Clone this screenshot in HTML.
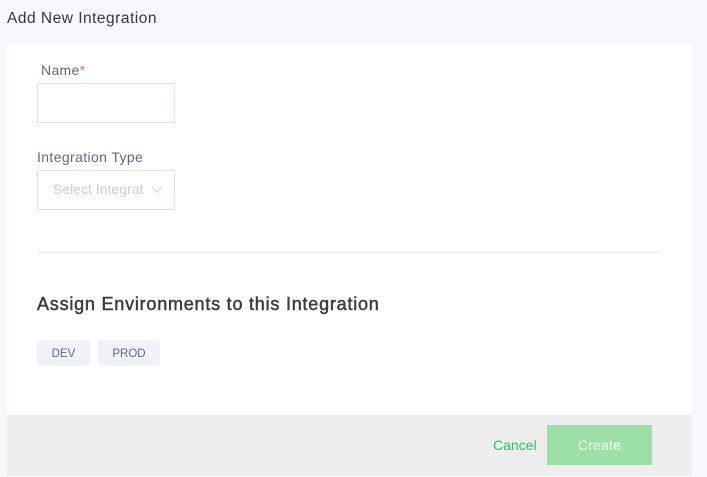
<!DOCTYPE html>
<html>
<head>
<meta charset="utf-8">
<style>
html,body{margin:0;padding:0;}
body{width:707px;height:477px;position:relative;overflow:hidden;background:#f7f8fb;font-family:"Liberation Sans",sans-serif;}
.a{position:absolute;white-space:nowrap;}
.box{position:absolute;box-sizing:border-box;border:1px solid #dfe0e8;background:#fff;}
</style>
</head>
<body>
<div class="a" style="left:7px;top:9px;font-size:15.5px;line-height:19px;color:#33373d;letter-spacing:0.5px;">Add New Integration</div>
<div class="a" style="left:7px;top:43px;width:685px;height:372px;background:#fff;"></div>
<div class="a" style="left:7px;top:415px;width:685px;height:60px;background:#eeeeee;"></div>
<div class="a" style="left:41px;top:61px;font-size:14px;line-height:18px;color:#5f6a7d;letter-spacing:0.33px;">Name<span style="color:#f46a72;">*</span></div>
<div class="box" style="left:37px;top:83px;width:138px;height:40px;"></div>
<div class="a" style="left:37px;top:148px;font-size:14px;line-height:18px;color:#5f6a7d;letter-spacing:0.38px;">Integration Type</div>
<div class="box" style="left:37px;top:170px;width:138px;height:40px;"></div>
<div class="a" style="left:53px;top:180px;width:91px;overflow:hidden;font-size:14px;line-height:18px;color:#c9cdd6;letter-spacing:0;">Select Integration</div>
<svg class="a" style="left:151px;top:186px;" width="12" height="8" viewBox="0 0 12 8"><path d="M1 1.2L6 6.2L11 1.2" fill="none" stroke="#c6cad3" stroke-width="1"/></svg>
<div class="a" style="left:37px;top:252px;width:624px;height:1px;background:#e9eaee;"></div>
<div class="a" style="left:37px;top:293px;font-size:18px;line-height:22px;color:#3a3d42;letter-spacing:0.78px;-webkit-text-stroke:0.5px #3a3d42;">Assign Environments to this Integration</div>
<div class="a" style="left:37px;top:340px;width:53px;height:26px;border-radius:4px;background:#f0f2f7;text-align:center;font-size:11.5px;line-height:28px;color:#5f6a7d;">DEV</div>
<div class="a" style="left:98px;top:340px;width:62px;height:26px;border-radius:4px;background:#f0f2f7;text-align:center;font-size:11.5px;line-height:28px;color:#5f6a7d;">PROD</div>
<div class="a" style="left:493px;top:435px;font-size:14px;line-height:20px;color:#22c55e;">Cancel</div>
<div class="a" style="left:547px;top:425px;width:105px;height:40px;background:#9ce0a8;color:#f4fbf5;text-align:center;font-size:14px;line-height:40px;letter-spacing:0.2px;">Create</div>
</body>
</html>
